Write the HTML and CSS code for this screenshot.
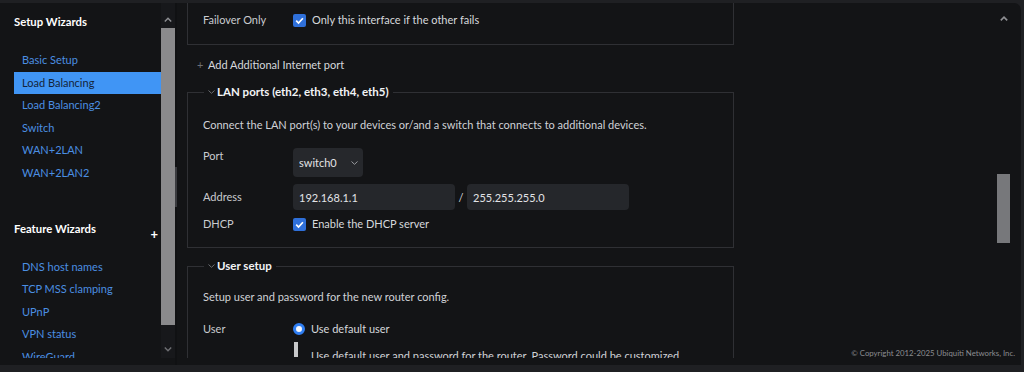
FILE: index.html
```html
<!DOCTYPE html>
<html lang="en">
<head>
    <title>Wizards</title>
    <meta name="viewport" content="width=device-width, initial-scale=1.0">
    <link rel="stylesheet" href="styles.css">
</head>
<body>
    <div class="window">
        <div class="sidebar">
            <div class="side-list">
                <h3 class="side-head">Setup Wizards</h3>
                <ul class="side-links">
                    <li>Basic Setup</li>
                    <li class="active">Load Balancing</li>
                    <li>Load Balancing2</li>
                    <li>Switch</li>
                    <li>WAN+2LAN</li>
                    <li>WAN+2LAN2</li>
                </ul>
                <h3 class="side-head second">Feature Wizards <span class="plus">+</span></h3>
                <ul class="side-links">
                    <li>DNS host names</li>
                    <li>TCP MSS clamping</li>
                    <li>UPnP</li>
                    <li>VPN status</li>
                    <li>WireGuard</li>
                </ul>
            </div>
            <div class="side-scroll">
                <svg class="arrow-up" width="8" height="5" viewBox="0 0 8 5"><path d="M0.8 4.4 L4 1.2 L7.2 4.4" fill="none" stroke="#8e8f93" stroke-width="1.4"/></svg>
                <div class="side-thumb"></div>
                <svg class="arrow-down" width="8" height="5" viewBox="0 0 8 5"><path d="M0.8 0.6 L4 3.8 L7.2 0.6" fill="none" stroke="#6e6f73" stroke-width="1.4"/></svg>
            </div>
        </div>
        <div class="divider"><div class="grip"></div></div>

        <div class="main">
            <div class="content">
                <div class="box box-top">
                    <div class="form-row">
                        <span class="label">Failover Only</span>
                        <label class="check">
                            <span class="checkbox"><svg width="13" height="13" viewBox="0 0 13 13"><path d="M3.2 6.7 L5.5 9 L9.9 4.2" fill="none" stroke="#fff" stroke-width="1.7"/></svg></span>
                            Only this interface if the other fails
                        </label>
                    </div>
                </div>

                <div class="add-port"><span class="add-plus">+</span>Add Additional Internet port</div>

                <fieldset class="box">
                    <legend><svg class="legend-arrow" width="7" height="4" viewBox="0 0 7 4"><path d="M0.5 0.5 L3.5 3.3 L6.5 0.5" fill="none" stroke="#6c6e72" stroke-width="1"/></svg>LAN ports (eth2, eth3, eth4, eth5)</legend>
                    <p class="desc">Connect the LAN port(s) to your devices or/and a switch that connects to additional devices.</p>
                    <div class="form-row row-port">
                        <span class="label">Port</span>
                        <div class="select-wrap">
                            <select class="select" name="port">
                                <option>switch0</option>
                            </select>
                            <svg class="select-arrow" width="7" height="4" viewBox="0 0 7 4"><path d="M0.5 0.5 L3.5 3.3 L6.5 0.5" fill="none" stroke="#9a9ca0" stroke-width="1"/></svg>
                        </div>
                    </div>
                    <div class="form-row row-address">
                        <span class="label">Address</span>
                        <input class="input" type="text" value="192.168.1.1">
                        <span class="slash">/</span>
                        <input class="input" type="text" value="255.255.255.0">
                    </div>
                    <div class="form-row row-dhcp">
                        <span class="label">DHCP</span>
                        <label class="check">
                            <span class="checkbox"><svg width="13" height="13" viewBox="0 0 13 13"><path d="M3.2 6.7 L5.5 9 L9.9 4.2" fill="none" stroke="#fff" stroke-width="1.7"/></svg></span>
                            Enable the DHCP server
                        </label>
                    </div>
                </fieldset>

                <fieldset class="box">
                    <legend><svg class="legend-arrow" width="7" height="4" viewBox="0 0 7 4"><path d="M0.5 0.5 L3.5 3.3 L6.5 0.5" fill="none" stroke="#6c6e72" stroke-width="1"/></svg>User setup</legend>
                    <p class="desc user-desc">Setup user and password for the new router config.</p>
                    <div class="form-row row-user">
                        <span class="label">User</span>
                        <label class="check"><span class="radio"></span>Use default user</label>
                    </div>
                    <div class="note">
                        <span class="note-bar"></span>
                        <span class="note-text">Use default user and password for the router. Password could be customized</span>
                    </div>
                </fieldset>
            </div>

            <div class="main-scroll">
                <svg class="arrow-up" width="8" height="5" viewBox="0 0 8 5"><path d="M0.8 4.4 L4 1.2 L7.2 4.4" fill="none" stroke="#8e8f93" stroke-width="1.6"/></svg>
                <div class="main-thumb"></div>
            </div>
        </div>

        <div class="copyright">&copy; Copyright 2012-2025 Ubiquiti Networks, Inc.</div>
    </div>
</body>
</html>
```

FILE: styles.css
```css
*{
    margin:0;
    padding:0;
    box-sizing:border-box;
}
body{
    width:1024px;
    height:372px;
    overflow:hidden;
    background-color:#1f2023;
    font-family:Lato, "Liberation Sans", sans-serif;
    font-size:11px;
    color:#d3d5d9;
}
.window{
    position:relative;
    display:flex;
    height:362px;
    margin:3px 3px 0 0;
    background-color:#131416;
    border-top-right-radius:7px;
    overflow:hidden;
}

/* sidebar */
.sidebar{
    display:flex;
    flex:none;
    width:175px;
    height:355px;
}
.side-list{
    width:161px;
    padding:11px 0 0 14px;
    overflow:hidden;
}
.side-head{
    display:flex;
    justify-content:space-between;
    align-items:center;
    height:16px;
    padding-right:3px;
    font-size:11.3px;
    font-weight:700;
    line-height:16px;
    color:#ffffff;
}
.side-head.second{
    margin-top:36px;
}
.plus{
    position:relative;
    top:5px;
    font-size:13px;
}
.side-links{
    list-style:none;
    margin-top:19px;
}
.side-links li{
    height:22.6px;
    line-height:22.6px;
    padding-left:8px;
    font-size:11px;
    color:#4b8fe2;
}
.side-links li.active{
    background-color:#4095f5;
    color:#14243a;
}
.side-scroll{
    display:flex;
    flex-direction:column;
    align-items:center;
    width:14px;
    background-color:#17181b;
}
.side-scroll .arrow-up{
    margin-top:14px;
}
.side-thumb{
    width:14px;
    height:297px;
    margin-top:6px;
    background-color:#8a8a8c;
}
.side-scroll .arrow-down{
    margin-top:22px;
}
.divider{
    flex:none;
    width:2px;
    background-color:#101113;
}
.grip{
    height:40px;
    margin-top:164px;
    background-color:#3a3b3f;
}

/* main area */
.main{
    display:flex;
    flex:1;
    height:355px;
    padding-left:10px;
    overflow:hidden;
}
.content{
    flex:none;
    width:547px;
}
.box{
    border:1px solid #2f3034;
    padding:0 15px 15px;
}
.box-top{
    margin-top:-13px;
    padding:19px 15px 14px;
}
legend{
    display:flex;
    align-items:center;
    margin-left:1px;
    padding:0 4px 0 4px;
    line-height:16px;
    font-size:11.5px;
    font-weight:700;
    color:#f2f3f5;
}
.legend-arrow{
    margin-right:2px;
}
.form-row{
    display:flex;
    align-items:center;
    min-height:20px;
}
.label{
    flex:none;
    width:90px;
    line-height:16px;
    color:#c9cbcf;
}
.check{
    display:flex;
    align-items:center;
    gap:6px;
    line-height:16px;
    color:#d6d8dc;
}
.checkbox{
    display:block;
    width:13px;
    height:13px;
    border-radius:2px;
    background-color:#2f70da;
}
.checkbox svg{
    display:block;
}
.radio{
    display:block;
    width:12px;
    height:12px;
    border-radius:50%;
    border:3.5px solid #2f7ef2;
    background-color:#f4f6fa;
}
.add-port{
    display:flex;
    align-items:center;
    height:20px;
    margin-top:9px;
    padding-left:10px;
    color:#d6d8dc;
}
.add-plus{
    width:11px;
    font-size:11px;
    color:#6d6f73;
}
fieldset.box{
    margin-top:10px;
}
.desc{
    margin-top:17px;
    line-height:16px;
    color:#d0d2d6;
}
.row-port{
    align-items:flex-start;
    margin-top:15px;
}
.select-wrap{
    position:relative;
    width:70px;
    height:29px;
}
.select{
    appearance:none;
    width:70px;
    height:29px;
    padding-left:6px;
    border:none;
    border-radius:4px;
    background-color:#26282c;
    font-family:inherit;
    font-size:11px;
    color:#e2e3e6;
}
.select-arrow{
    position:absolute;
    top:13px;
    left:58px;
}
.row-address{
    margin-top:7px;
}
.input{
    width:162px;
    height:26px;
    padding-left:6px;
    border:none;
    border-radius:4px;
    background-color:#25272b;
    font-family:inherit;
    font-size:11px;
    color:#e2e3e6;
}
.slash{
    width:12px;
    text-align:center;
    color:#d6d8dc;
}
.row-dhcp{
    min-height:16px;
    margin-top:6px;
}
.user-desc{
    margin-top:15px;
}
.row-user{
    min-height:16px;
    margin-top:16px;
}
.note{
    display:flex;
    margin-top:5px;
    padding-left:91px;
}
.note-bar{
    flex:none;
    width:4px;
    height:15px;
    background-color:#c7c8ca;
}
.note-text{
    padding:6px 0 0 13px;
    line-height:16px;
    white-space:nowrap;
    color:#d0d2d6;
}
.main-scroll{
    display:flex;
    flex-direction:column;
    align-items:center;
    flex:none;
    width:13px;
    margin-left:auto;
    margin-right:11px;
}
.main-scroll .arrow-up{
    margin-top:13px;
}
.main-thumb{
    width:13px;
    height:69px;
    margin-top:153px;
    background-color:#77787b;
}
.copyright{
    position:absolute;
    right:6px;
    bottom:4px;
    line-height:16px;
    font-size:7.8px;
    color:#8b8d91;
}
```
